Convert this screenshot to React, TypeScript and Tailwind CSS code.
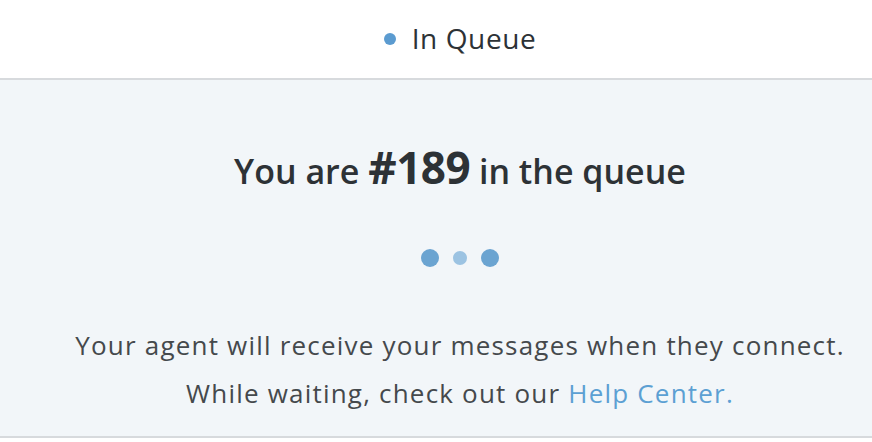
import React from "react";

export default function App() {
  const font = { fontFamily: '"Open Sans", sans-serif' };
  return (
    <div className="w-[872px] h-[442px] bg-white flex flex-col" style={font}>
      <div className="h-[80px] pl-[48px] flex items-center justify-center gap-[16px] border-b-2 border-[#d7dadd]">
        <span className="w-[12px] h-[12px] rounded-full bg-[#5b9bd0]" />
        <span className="text-[28px] tracking-[0.6px] text-[#2d3236] leading-none pb-[3px]">In Queue</span>
      </div>
      <div className="h-[358px] pl-[48px] bg-[#f2f6f9] border-b-2 border-[#d7dadd] flex flex-col items-center">
        <div className="mt-[54px] flex items-baseline text-[#2d3236] font-semibold">
          <span className="text-[34px]">You are&nbsp;</span>
          <span className="text-[44px] font-bold tracking-[-0.5px]">#189</span>
          <span className="text-[34px]">&nbsp;in the queue</span>
        </div>
        <div className="mt-[49px] flex items-center gap-[14px]">
          <span className="w-[18px] h-[18px] rounded-full bg-[#6ba4d1]" />
          <span className="w-[14px] h-[14px] rounded-full bg-[#9cc3e2]" />
          <span className="w-[18px] h-[18px] rounded-full bg-[#6ba4d1]" />
        </div>
        <div className="mt-[54px] text-[26px] tracking-[1.2px] leading-[48px] text-[#45494c] text-center">
          <p>Your agent will receive your messages when they connect.</p>
          <p>
            While waiting, check out our <span className="text-[#5ca0d3]">Help Center.</span>
          </p>
        </div>
      </div>
    </div>
  );
}
